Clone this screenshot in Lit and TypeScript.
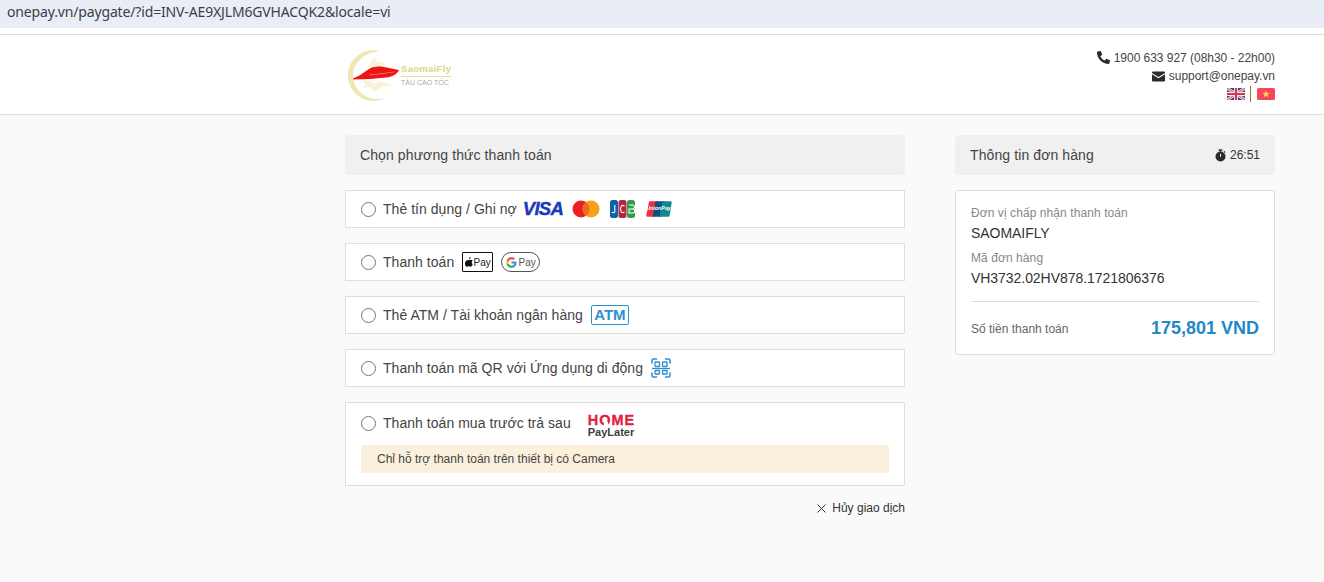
import { LitElement, html, css } from "lit";
import { customElement } from "lit/decorators.js";

const phone = html`<svg class="ic" width="13" height="13" viewBox="0 0 512 512"><path fill="#2b2b2b" d="M493 24 389 0c-11-3-23 3-27 14l-48 112c-4 10-1 21 7 28l61 50c-36 76-98 139-175 175l-50-61c-7-8-18-11-28-7L17 359C6 364 0 376 3 387l24 104c3 11 12 19 23 19 256 0 464-207 464-464 0-11-8-20-21-22z" transform="matrix(-1 0 0 1 514 0)"/></svg>`;
const mail = html`<svg class="ic" width="13" height="11" viewBox="0 0 13 11"><path fill="#2b2b2b" d="M1 0.5h11a1 1 0 0 1 1 1v.4L6.5 6 0 1.900v-.4a1 1 0 0 1 1-1zM0 3.200 6.500 7.300 13 3.200V9.500a1 1 0 0 1-1 1H1a1 1 0 0 1-1-1z"/></svg>`;
const ukFlag = html`<svg width="18" height="12" viewBox="0 0 18 12"><rect width="18" height="12" rx="1.500" fill="#34468f"/><path d="M0 0 18 12M18 0 0 12" stroke="#e8e8f0" stroke-width="2.800"/><path d="M0 0 18 12M18 0 0 12" stroke="#d8455c" stroke-width="1"/><path d="M9 0v12M0 6h18" stroke="#f0e8ec" stroke-width="4"/><path d="M9 0v12M0 6h18" stroke="#d8384f" stroke-width="2.200"/></svg>`;
const vnFlag = html`<svg width="18" height="12" viewBox="0 0 18 12"><rect width="18" height="12" rx="1.500" fill="#f5475a"/><path fill="#ffd84a" d="m9 2.400 1 2.600h2.700l-2.200 1.600.8 2.700L9 7.700 6.700 9.300l.8-2.700L5.300 5H8z"/></svg>`;
const timer = html`<svg class="ic" width="11" height="13" viewBox="0 0 11 13"><circle cx="5.500" cy="7.500" r="5" fill="#2b2b2b"/><rect x="3.700" y="0.300" width="3.600" height="1.500" fill="#2b2b2b"/><rect x="5" y="1" width="1" height="2" fill="#2b2b2b"/><path d="m9 2.300 1.200 1.200" stroke="#2b2b2b" stroke-width="1.200"/><path d="M5.500 4.800v3" stroke="#fff" stroke-width="1"/></svg>`;
const logo = html`<svg class="logo-art" width="56" height="54" viewBox="0 0 56 54">
  <path fill="#f0e6b0" d="M28 1C13 1 2 13 2 26.500S13 52 27 52c5 0 9-1 13-3.500-3 1-5 1.500-9 1.500C18 50 7 39 7 26.500S18 4 33 2c-2-.7-3-1-5-1z"/>
  <path fill="#f8f2d8" d="M24 14l4-6 4 5 8 0-5 5 3 1H21zM17 32l8 0 3 3 5-3 8 2 6 4-10-1-8 6-5-5-8 1 3-3z"/>
  <path fill="#ee1414" d="M7 29.500C13 27.500 18 23 23 20 27 17.500 33 17 38 18L53 21C51 25.500 46 28 40 28.500 30 29.500 18 30.500 7 30.500z"/>
  <path fill="#fff" opacity=".55" d="M24 25.500c8-.7 16-1.500 25-3l-1 .8c-8 1.400-16 2.400-24 3z"/>
</svg>`;
const mc = html`<svg width="28" height="18" viewBox="0 0 28 18"><circle cx="9" cy="9" r="8.500" fill="#eb2027"/><circle cx="19" cy="9" r="8.500" fill="#f79e1b"/><path fill="#f06a22" d="M14 2.200a8.500 8.500 0 0 1 0 13.600 8.500 8.500 0 0 1 0-13.600z"/></svg>`;
const jcb = html`<svg width="25" height="18" viewBox="0 0 25 18"><rect x="0" width="8" height="18" rx="2.500" fill="#0f62a8"/><rect x="8.500" width="8" height="18" rx="2.500" fill="#b8233f"/><rect x="17" width="8" height="18" rx="2.500" fill="#2f9e4a"/><path d="M4.800 5v6.500c0 1.500-2.500 1.500-3 .5M14.500 6c-2-1.300-4-.5-4 3s2 4.300 4 3M19 5h3.500a1.800 1.800 0 0 1 0 4H19m0 0h3.800a2 2 0 0 1 0 4H19z" fill="none" stroke="#fff" stroke-width="1.100"/></svg>`;
const unionPay = html`<svg width="26" height="16" viewBox="0 0 27 16"><path fill="#e5343f" d="M4 0h8L9 16H1.500Q0 16 .3 14.500L3 1Q3.200 0 4 0z"/><path fill="#0b4f86" d="M10 0h9l-3 16H7z"/><path fill="#0e8a8f" d="M17 0h8.500Q27 0 26.700 1.500L24.500 15Q24.300 16 23 16h-9z"/><text x="13" y="9" font-size="5.500" font-style="italic" font-weight="700" text-anchor="middle" fill="#fff" font-family="Liberation Sans, sans-serif">UnionPay</text></svg>`;
const apple = html`<svg width="8" height="10" viewBox="0 0 8 10"><path fill="#111" d="M5.700 0c.1.900-.7 2-1.800 1.900C3.800 1 4.700.1 5.700 0zM7.800 7.100C7.300 8.400 6.500 9.700 5.500 9.700c-.8 0-1-.5-1.900-.5s-1.200.5-1.900.5C.700 9.700-.6 7.500.3 5.100 1 3.300 2.800 2.600 3.800 3c.4.200.7.200 1.100 0 1-.5 2.200-.2 2.900.8-1.600 1-1.300 2.800 0 3.300z"/></svg>`;
const gLogo = html`<svg width="11" height="11" viewBox="0 0 24 24"><path fill="#4285f4" d="M23 12.300c0-.8-.1-1.600-.2-2.300H12v4.400h6.200c-.3 1.400-1.100 2.600-2.300 3.400v2.800h3.700c2.200-2 3.400-5 3.400-8.300z"/><path fill="#34a853" d="M12 23.500c3.100 0 5.700-1 7.600-2.800l-3.700-2.900c-1 .7-2.400 1.100-3.900 1.100-3 0-5.500-2-6.400-4.700H1.800v2.900c1.900 3.800 5.800 6.400 10.200 6.400z"/><path fill="#fbbc05" d="M5.600 14.200c-.5-1.400-.5-3 0-4.400V6.900H1.800c-1.600 3.200-1.600 7 0 10.200z"/><path fill="#ea4335" d="M12 5.100c1.700 0 3.200.6 4.300 1.700l3.300-3.300C17.700 1.700 15.100.5 12 .5 7.600.5 3.700 3.100 1.800 6.900l3.800 2.900C6.500 7.100 9 5.100 12 5.100z"/></svg>`;
const qr = html`<svg width="20" height="20" viewBox="0 0 20 20" fill="none" stroke="#2e8fd0" stroke-width="1.300"><path stroke-width="1.600" d="M1 5.500V2.500A1.500 1.500 0 0 1 2.500 1H6M14 1h3.500A1.500 1.500 0 0 1 19 2.500V5.500M19 14.500v3a1.500 1.500 0 0 1-1.500 1.500H14M6 19H2.500A1.500 1.500 0 0 1 1 17.500V14.500"/><rect x="4" y="4" width="4.500" height="4.500" rx=".6"/><rect x="11.500" y="4" width="4.500" height="4.500" rx=".6"/><path d="M1 10.500h18"/><rect x="4" y="12.500" width="4.500" height="3.500" rx=".6"/><path d="M11.500 12.500v3.500h4.500v-3.500z"/></svg>`;
const close = html`<svg class="ic x" width="9" height="9" viewBox="0 0 9 9"><path d="M.5.500l8 8M8.500.500l-8 8" stroke="#333" stroke-width="1"/></svg>`;

@customElement("app-root")
export class AppRoot extends LitElement {
  static styles = css`
    :host { display: block; min-height: 582px; background: #fafafa; font-family: "Liberation Sans", Arial, sans-serif; color: #333; font-size: 13px; }
    .url { height: 28px; background: #e9edf6; padding-left: 7px; font: 14px/23px "Noto Sans", sans-serif; color: #3a3f47; letter-spacing: -0.15px; }
    .urlgap { height: 6px; background: #fff; border-bottom: 1px solid #dedede; }
    header { background: #fff; height: 79px; border-bottom: 1px solid #dedede; display: flex; padding-left: 345px; }
    .wrap { width: 930px; display: flex; }
    .head { justify-content: space-between; }
    .logo { display: flex; align-items: flex-start; padding: 14px 0 0 1px; }
    .brand { margin: 14px 0 0 -1px; width: 50px; }
    .brand .n { color: #e3d18a; font-size: 9.500px; font-weight: 700; line-height: 12px; padding-bottom: 1px; border-bottom: 1px solid #e8dca6; letter-spacing: .3px; white-space: nowrap; }
    .brand .s { color: #b0ad9a; font-size: 7px; line-height: 10px; margin-top: 1px; white-space: nowrap; }
    .contact { text-align: right; padding-top: 14px; font-size: 12px; color: #444; line-height: 18px; letter-spacing: -.03px; }
    .ic { vertical-align: -1.500px; margin-right: 4px; }
    .x { margin-right: 6px; vertical-align: -.5px; }
    .flags { display: flex; justify-content: flex-end; align-items: center; height: 17px; }
    .flags i { width: 1px; height: 16px; background: #a86a30; margin: 0 6px 0 5px; }
    main { display: flex; padding: 20px 0 0 345px; }
    .left { width: 560px; margin-right: 50px; }
    .right { width: 320px; }
    .title { height: 40px; background: #f0f0f0; border-radius: 4px; padding: 0 15px; display: flex; align-items: center; justify-content: space-between; font-size: 14px; color: #444; letter-spacing: .1px; }
    .time { font-size: 12px; color: #333; display: flex; align-items: center; letter-spacing: 0; }
    .row { border: 1px solid #dedede; background: #fff; margin-top: 15px; padding: 0 15px; height: 36px; display: flex; align-items: center; font-size: 14px; color: #444; letter-spacing: .04px; }
    .radio { width: 13px; height: 13px; border: 1px solid #777; border-radius: 50%; margin-right: 7px; flex: none; background: #fff; }
    .logos { display: flex; align-items: center; }
    .visa { display: block; width: 40px; font: italic 700 18.500px "Liberation Sans", sans-serif; -webkit-text-stroke: .4px #1a3ab8; color: #1a3ab8; margin: 0 9px 0 6px; letter-spacing: -.7px; }
    .apay { border: 1px solid #111; height: 18px; width: 29px; margin-left: 8px; display: flex; align-items: center; justify-content: center; gap: 1px; font-size: 10px; color: #222; border-radius: 1px; letter-spacing: 0; }
    .gpay { border: 1px solid #555; height: 18px; width: 37px; margin-left: 8px; border-radius: 10px; display: flex; align-items: center; justify-content: center; gap: 2px; font-size: 10px; color: #555; letter-spacing: 0; }
    .atm { margin-left: 8px; border: 1px solid #2e8fd0; border-radius: 2px; color: #2e8fd0; font-weight: 700; font-size: 15px; width: 36px; height: 18px; line-height: 18px; text-align: center; letter-spacing: 0; }
    .bnpl { display: block; height: 82px; padding: 0 15px; }
    .bnpl-top { display: flex; align-items: center; height: 42px; margin-top: -1px; }
    .home { margin-left: 17px; width: 47px; margin-top: 5px; }
    .home b { display: block; position: relative; font-size: 14.500px; line-height: 14px; color: #e3203c; letter-spacing: 1px; white-space: nowrap; -webkit-text-stroke: .3px #e3203c; }
    .home b i { position: absolute; left: 16px; bottom: 1px; width: 4px; height: 4px; background: #fff; }
    .home span { display: block; font-weight: 700; font-size: 11px; line-height: 11px; color: #3d3d3d; white-space: nowrap; letter-spacing: 0; }
    .notice { height: 28px; margin-top: 1px; background: #faf0dc; border-radius: 2px; padding-left: 16px; line-height: 28px; font-size: 12px; color: #444; letter-spacing: 0; }
    .cancel { text-align: right; font-size: 12px; margin-top: 15px; color: #333; }
    .card { margin-top: 15px; background: #fff; border: 1px solid #dedede; border-radius: 3px; padding: 15px; height: 133px; }
    .lbl { font-size: 12px; color: #888; line-height: 14px; letter-spacing: .08px; }
    .val { font-size: 14px; color: #333; line-height: 16px; margin: 5px 0 10px; letter-spacing: -.05px; }
    hr { border: 0; border-top: 1px solid #dedede; margin: 15px 0 0; }
    .total { display: flex; justify-content: space-between; align-items: center; height: 53px; font-size: 12px; color: #666; }
    .total b { font-size: 18px; color: #2587c8; }
  `;

  render() {
    return html`
      <div class="url">onepay.vn/paygate/?id=INV-AE9XJLM6GVHACQK2&amp;locale=vi</div>
      <div class="urlgap"></div>
      <header>
        <div class="wrap head">
          <div class="logo">${logo}<div class="brand"><div class="n">SaomaiFly</div><div class="s">TÀU CAO TỐC</div></div></div>
          <div class="contact">
            <div>${phone}1900 633 927 (08h30 - 22h00)</div>
            <div>${mail}support@onepay.vn</div>
            <div class="flags">${ukFlag}<i></i>${vnFlag}</div>
          </div>
        </div>
      </header>
      <main>
        <div class="left">
          <div class="title">Chọn phương thức thanh toán</div>
          <div class="row"><span class="radio"></span>Thẻ tín dụng / Ghi nợ
            <span class="logos"><span class="visa">VISA</span>${mc}<span style="width:10px"></span>${jcb}<span style="width:11px"></span>${unionPay}</span></div>
          <div class="row"><span class="radio"></span>Thanh toán
            <span class="apay">${apple}Pay</span><span class="gpay">${gLogo}Pay</span></div>
          <div class="row"><span class="radio"></span>Thẻ ATM / Tài khoản ngân hàng<span class="atm">ATM</span></div>
          <div class="row"><span class="radio"></span>Thanh toán mã QR với Ứng dụng di động<span class="logos" style="margin-left:8px">${qr}</span></div>
          <div class="row bnpl">
            <div class="bnpl-top"><span class="radio"></span>Thanh toán mua trước trả sau<div class="home"><b>HOME<i></i></b><span>PayLater</span></div></div>
            <div class="notice">Chỉ hỗ trợ thanh toán trên thiết bị có Camera</div>
          </div>
          <div class="cancel">${close}Hủy giao dịch</div>
        </div>
        <div class="right">
          <div class="title">Thông tin đơn hàng<span class="time">${timer}26:51</span></div>
          <div class="card">
            <div class="lbl">Đơn vị chấp nhận thanh toán</div>
            <div class="val">SAOMAIFLY</div>
            <div class="lbl">Mã đơn hàng</div>
            <div class="val">VH3732.02HV878.1721806376</div>
            <hr />
            <div class="total"><span>Số tiền thanh toán</span><b>175,801 VND</b></div>
          </div>
        </div>
      </main>
    `;
  }
}
